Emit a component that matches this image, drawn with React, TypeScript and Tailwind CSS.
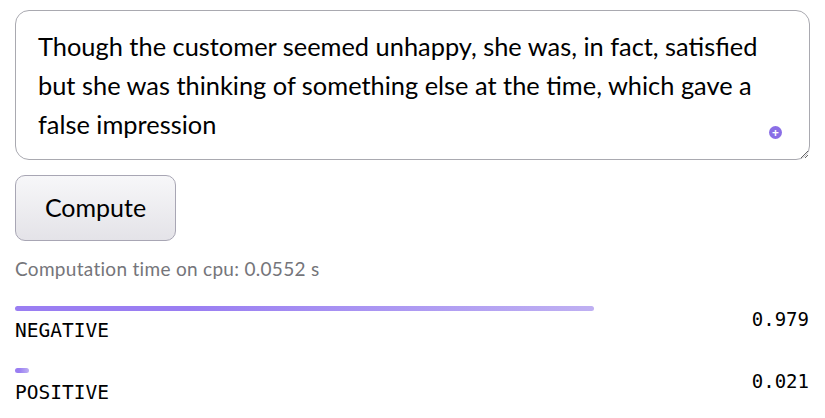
export default function App() {
  const rows = [
    { label: "NEGATIVE", value: "0.979", pct: 0.979 },
    { label: "POSITIVE", value: "0.021", pct: 0.021 },
  ];
  return (
    <div className="w-[825px] h-[418px] bg-white px-[15px] pt-[10px] overflow-hidden">
      <div className="relative">
        <textarea
          readOnly
          defaultValue="Though the customer seemed unhappy, she was, in fact, satisfied but she was thinking of something else at the time, which gave a false impression"
          className="block w-[795px] h-[150px] rounded-[14px] border border-[#a9a9b0] bg-white pl-[22px] pr-[29px] pt-[16px] text-[25.4px] leading-[39px] text-black outline-none resize-y"
          style={{ fontFamily: "Lato, 'Open Sans', sans-serif" }}
        />
        <span className="absolute left-[754px] top-[116px] flex h-[13px] w-[13px] items-center justify-center rounded-full bg-[#8a6ee6] text-[12px] font-bold leading-none text-white">
          +
        </span>
      </div>
      <button
        className="mt-[15px] flex h-[66px] w-[161px] items-center justify-center rounded-[10px] border border-[#a8a6b4] bg-gradient-to-b from-[#f7f7f9] to-[#e4e3e8] text-[25px] text-black"
        style={{ fontFamily: "Lato, 'Open Sans', sans-serif" }}
      >
        Compute
      </button>
      <p
        className="mt-[16px] text-[19px] leading-[24px] tracking-[0.3px] text-[#75757a]"
        style={{ fontFamily: "Lato, 'Open Sans', sans-serif" }}
      >
        Computation time on cpu: 0.0552 s
      </p>
      <div className="mt-[25px] flex flex-col gap-[27px]" style={{ fontFamily: "'DejaVu Sans Mono', monospace" }}>
        {rows.map((r) => (
          <div key={r.label} className="flex items-start justify-between">
            <div className="w-[591px]">
              <div
                className="h-[5px] rounded-full bg-gradient-to-r from-[#9a7ef2] from-30% to-[#bfb0f2]"
                style={{ width: `${Math.max(r.pct * 100, 2.4)}%` }}
              />
              <div className="mt-[10px] text-[19.5px] leading-[20px] text-black">{r.label}</div>
            </div>
            <div className="mt-[3px] pr-[1px] text-[19px] leading-[20px] text-black">{r.value}</div>
          </div>
        ))}
      </div>
    </div>
  );
}
